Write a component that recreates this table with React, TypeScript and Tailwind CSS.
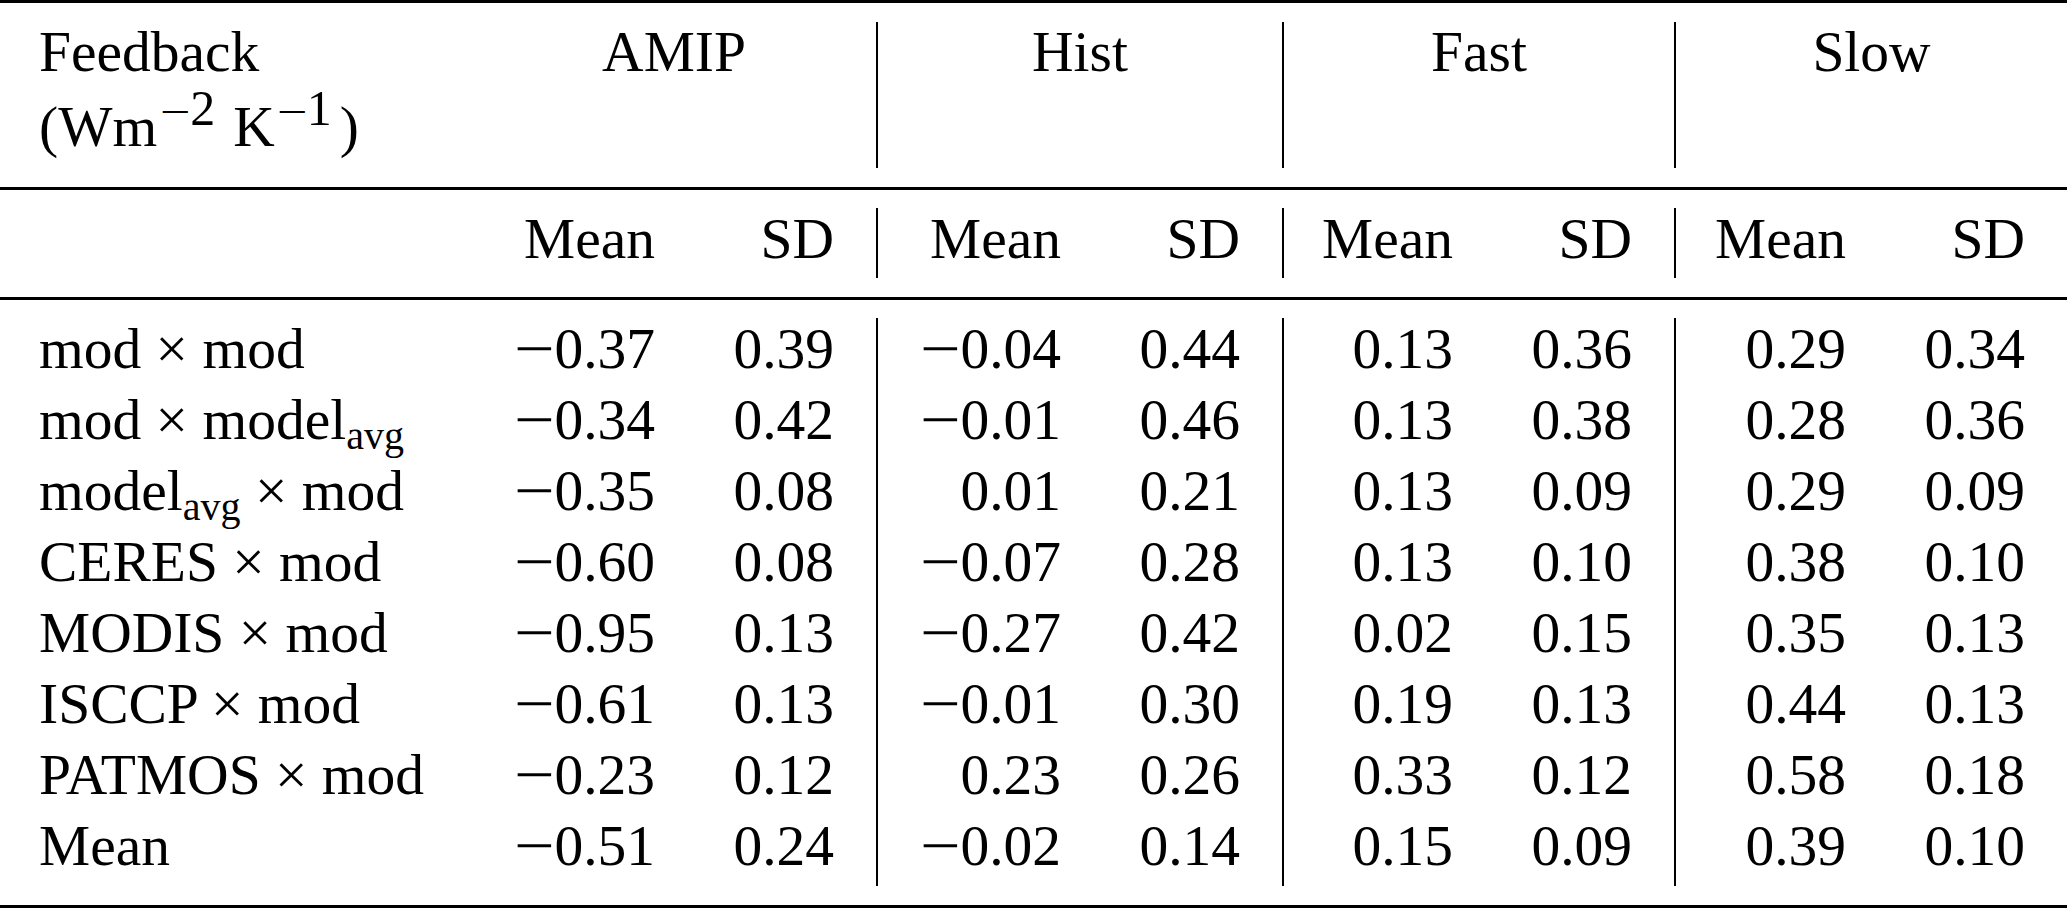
import React from "react";

type Row = { label: React.ReactNode; values: string[] };

const cols = "grid grid-cols-[472px_223px_183px_223px_183px_209px_183px_210px_181px]";

const Sub = ({ children }: { children: React.ReactNode }) => (
    <span className="relative top-[10px] text-[40px] leading-none">{children}</span>
);

// superscript with the long math minus
const Sup = ({ digit, className }: { digit: string; className: string }) => (
    <span className={`relative -top-[21px] text-[50px] leading-none ${className}`}>
        <span className="inline-block w-[30px] origin-left scale-x-[1.35] text-[40px]">−</span>
        {digit}
    </span>
);

const rows: Row[] = [
    { label: <>mod × mod</>, values: ["−0.37", "0.39", "−0.04", "0.44", "0.13", "0.36", "0.29", "0.34"] },
    { label: <>mod × model<Sub>avg</Sub></>, values: ["−0.34", "0.42", "−0.01", "0.46", "0.13", "0.38", "0.28", "0.36"] },
    { label: <>model<Sub>avg</Sub> × mod</>, values: ["−0.35", "0.08", "0.01", "0.21", "0.13", "0.09", "0.29", "0.09"] },
    { label: <>CERES × mod</>, values: ["−0.60", "0.08", "−0.07", "0.28", "0.13", "0.10", "0.38", "0.10"] },
    { label: <>MODIS × mod</>, values: ["−0.95", "0.13", "−0.27", "0.42", "0.02", "0.15", "0.35", "0.13"] },
    { label: <>ISCCP × mod</>, values: ["−0.61", "0.13", "−0.01", "0.30", "0.19", "0.13", "0.44", "0.13"] },
    { label: <>PATMOS × mod</>, values: ["−0.23", "0.12", "0.23", "0.26", "0.33", "0.12", "0.58", "0.18"] },
    { label: <>Mean</>, values: ["−0.51", "0.24", "−0.02", "0.14", "0.15", "0.09", "0.39", "0.10"] },
];

const groups = ["AMIP", "Hist", "Fast", "Slow"];

// Mean columns sit at even index, SD at odd; SD of the first three groups carries the rule
const cellClass = (i: number) =>
    i % 2 === 0
        ? "text-right pr-[40px]"
        : i < 6
          ? "text-right pr-[42px] border-r-2 border-black"
          : "text-right pr-[42px]";

const Num = ({ v }: { v: string }) =>
    v.startsWith("−") ? (
        <>
            <span className="inline-block origin-right scale-x-[1.25]">−</span>
            {v.slice(1)}
        </>
    ) : (
        <>{v}</>
    );

const Rule = () => <div className="h-[3px] bg-black" />;

export default function App() {
    return (
        <div className="w-[2067px] h-[909px] bg-white text-black font-['Liberation_Serif','Times_New_Roman',serif] text-[57.5px] overflow-hidden">
            <Rule />

            {/* HEADER */}
            <div className="py-[19px]">
                <div className={`${cols} h-[146px]`}>
                    <div className="pl-[39px]">
                        <div className="leading-[60px]">Feedback</div>
                        <div className="mt-[14px] leading-[62px] whitespace-nowrap">
                            (Wm
                            <Sup digit="2" className="ml-[3px] mr-[18px]" />
                            K
                            <Sup digit="1" className="ml-[2px] mr-[8px]" />)
                        </div>
                    </div>
                    {groups.map((g, i) => (
                        <div
                            key={g}
                            className={`col-span-2 text-center leading-[60px] ${i < 3 ? "border-r-2 border-black" : ""}`}
                        >
                            {g}
                        </div>
                    ))}
                </div>
            </div>

            <Rule />

            {/* SUB HEADER */}
            <div className="pt-[18px] pb-[19px]">
                <div className={`${cols} h-[70px] leading-[62px]`}>
                    <div />
                    {Array.from({ length: 8 }).map((_, i) => (
                        <div key={i} className={cellClass(i)}>
                            {i % 2 === 0 ? "Mean" : "SD"}
                        </div>
                    ))}
                </div>
            </div>

            <Rule />

            {/* BODY */}
            <div className="pt-[18px] pb-[19px]">
                <div className={`${cols} auto-rows-[71px] leading-[62px]`}>
                    {rows.map((r, ri) => (
                        <React.Fragment key={ri}>
                            <div className="pl-[39px] whitespace-nowrap">{r.label}</div>
                            {r.values.map((v, i) => (
                                <div key={i} className={`${cellClass(i)} whitespace-nowrap`}>
                                    <Num v={v} />
                                </div>
                            ))}
                        </React.Fragment>
                    ))}
                </div>
            </div>

            <Rule />
        </div>
    );
}
